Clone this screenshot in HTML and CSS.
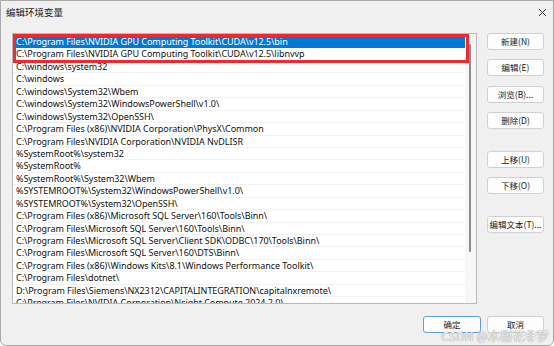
FILE: index.html
```html
<!DOCTYPE html>
<html lang="zh-CN">
<head>
<meta charset="utf-8">
<title>编辑环境变量</title>
<link rel="stylesheet" href="styles.css">
</head>
<body>
<div class="window">
  <div class="titlebar">
    <span class="title">编辑环境变量</span>
    <span class="close">
      <svg width="9" height="9" viewBox="0 0 9 9"><path d="M1 1L8 8M8 1L1 8" stroke="#333" stroke-width="1" fill="none"/></svg>
    </span>
  </div>
  <div class="content">
    <div class="listbox">
      <div class="rows">
        <div class="row selected">C:\Program Files\NVIDIA GPU Computing Toolkit\CUDA\v12.5\bin</div>
        <div class="row">C:\Program Files\NVIDIA GPU Computing Toolkit\CUDA\v12.5\libnvvp</div>
        <div class="row">C:\windows\system32</div>
        <div class="row">C:\windows</div>
        <div class="row">C:\windows\System32\Wbem</div>
        <div class="row">C:\windows\System32\WindowsPowerShell\v1.0\</div>
        <div class="row">C:\windows\System32\OpenSSH\</div>
        <div class="row">C:\Program Files (x86)\NVIDIA Corporation\PhysX\Common</div>
        <div class="row">C:\Program Files\NVIDIA Corporation\NVIDIA NvDLISR</div>
        <div class="row">%SystemRoot%\system32</div>
        <div class="row">%SystemRoot%</div>
        <div class="row">%SystemRoot%\System32\Wbem</div>
        <div class="row">%SYSTEMROOT%\System32\WindowsPowerShell\v1.0\</div>
        <div class="row">%SYSTEMROOT%\System32\OpenSSH\</div>
        <div class="row">C:\Program Files (x86)\Microsoft SQL Server\160\Tools\Binn\</div>
        <div class="row">C:\Program Files\Microsoft SQL Server\160\Tools\Binn\</div>
        <div class="row">C:\Program Files\Microsoft SQL Server\Client SDK\ODBC\170\Tools\Binn\</div>
        <div class="row">C:\Program Files\Microsoft SQL Server\160\DTS\Binn\</div>
        <div class="row">C:\Program Files (x86)\Windows Kits\8.1\Windows Performance Toolkit\</div>
        <div class="row">C:\Program Files\dotnet\</div>
        <div class="row">D:\Program Files\Siemens\NX2312\CAPITALINTEGRATION\capitalnxremote\</div>
        <div class="row">C:\Program Files\NVIDIA Corporation\Nsight Compute 2024.2.0\</div>
      </div>
      <div class="track"><div class="thumb"></div></div>
      <div class="highlight"></div>
    </div>
    <div class="side">
      <div class="group">
        <button class="btn">新建(N)</button>
        <button class="btn">编辑(E)</button>
        <button class="btn">浏览(B)...</button>
        <button class="btn">删除(D)</button>
      </div>
      <div class="group">
        <button class="btn">上移(U)</button>
        <button class="btn">下移(O)</button>
      </div>
      <div class="group">
        <button class="btn">编辑文本(T)...</button>
      </div>
    </div>
  </div>
  <div class="footer">
    <button class="btn default">确定</button>
    <button class="btn">取消</button>
  </div>
  <div class="watermark">CSDN @水榭花非梦</div>
</div>
</body>
</html>
```

FILE: styles.css
```css
* { box-sizing: border-box; }
html, body { margin: 0; padding: 0; background: #ffffff; }
body {
  font-family: "Noto Sans", "Noto Sans CJK SC", sans-serif;
  font-size: 9px;
  color: #000;
}
.window {
  position: relative;
  width: 554px;
  height: 346px;
  background: #f0f0f0;
  border: 1px solid #a8a8a8;
  border-radius: 0 0 6px 6px;
  overflow: hidden;
}
.titlebar {
  height: 32px;
  display: flex;
  justify-content: space-between;
  align-items: flex-start;
  padding: 4px 6px 0 5px;
}
.title {
  font-family: "Noto Sans CJK SC", sans-serif;
  font-size: 9.5px;
  color: #1a1a1a;
  line-height: 14px;
}
.close { padding-top: 3px; padding-right: 0; line-height: 0; }
.content {
  display: flex;
  align-items: flex-start;
  padding-left: 11px;
}
.listbox {
  position: relative;
  width: 465px;
  height: 271px;
  border: 1px solid #b9b9b9;
  background: #f7f7f7;
  display: flex;
  overflow: hidden;
}
.rows {
  width: 452px;
  padding-top: 2px;
  background: #fff;
}
.row {
  height: 12.45px;
  line-height: 12px;
  padding-left: 3px;
  white-space: nowrap;
  overflow: hidden;
  border-bottom: 1px solid #f2f2f2;
  color: #111;
  font-size: 9px;
  letter-spacing: -0.05px;
}
.row.selected {
  background: #0078d7;
  color: #fff;
  border-bottom-color: #0078d7;
}
.track {
  flex: 1;
  padding: 10px 0 0 4px;
}
.thumb {
  width: 2px;
  height: 208px;
  background: #8a8a8a;
  border-radius: 1px;
}
.highlight {
  position: absolute;
  left: 0;
  top: 0;
  width: 456px;
  height: 29px;
  border: 3px solid #ee2a2f;
}
.side {
  margin-left: 10px;
  display: flex;
  flex-direction: column;
  gap: 22px;
}
.group {
  display: flex;
  flex-direction: column;
  gap: 9.3px;
}
.btn {
  width: 57px;
  height: 17px;
  padding: 0;
  background: #fdfdfd;
  border: 1px solid #d0d0d0;
  border-radius: 3px;
  font-family: "Noto Sans CJK SC", sans-serif;
  font-size: 8.5px;
  color: #1a1a1a;
  line-height: 15px;
}
.footer {
  display: flex;
  justify-content: flex-end;
  gap: 6px;
  padding: 12px 9px 0 0;
}
.btn.default {
  width: 58px;
  border: 1.3px solid #5a9fd8;
}
.watermark {
  position: absolute;
  right: 4px;
  bottom: 1px;
  font-family: "Noto Sans CJK SC", sans-serif;
  font-size: 12px;
  color: rgba(255,255,255,0.85);
  text-shadow: 0 0 1px #9a9a9a, 0 0 1px #9a9a9a;
  letter-spacing: 0.2px;
}
```
